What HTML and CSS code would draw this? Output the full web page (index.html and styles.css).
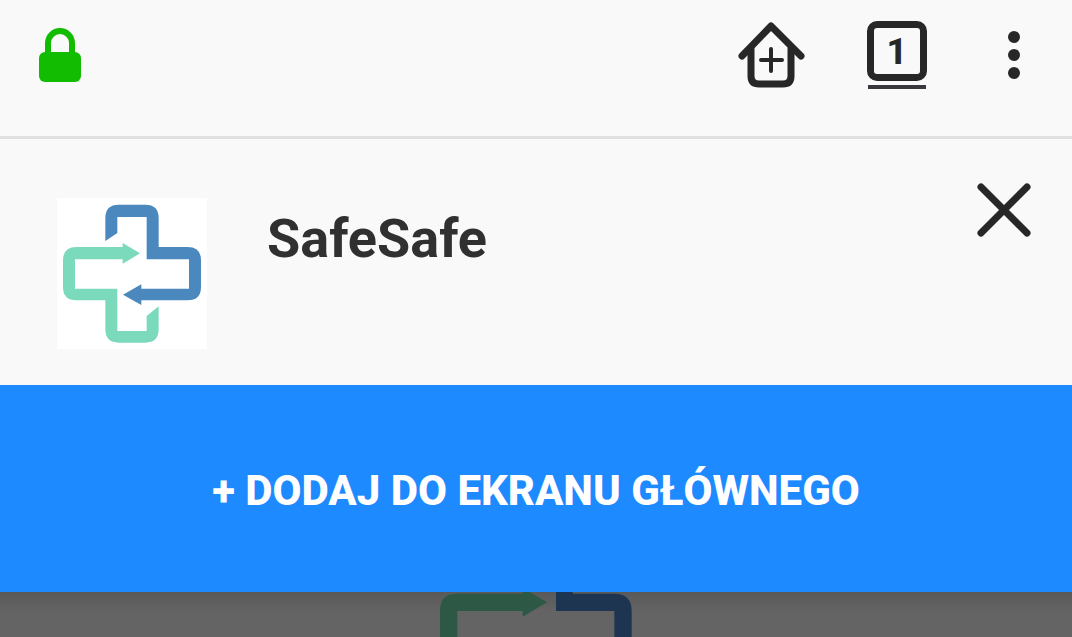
FILE: index.html
```html
<!DOCTYPE html>
<html lang="pl">
<head>
<meta charset="utf-8">
<meta name="viewport" content="width=device-width, initial-scale=1">
<title>SafeSafe</title>
<link rel="stylesheet" href="styles.css">
</head>
<body>
<header class="toolbar">
  <button class="icon-button lock" type="button" aria-label="Bezpieczne połączenie">
    <svg width="42" height="54" viewBox="0 0 42 54" aria-hidden="true">
      <path d="M9 27V15a12 12 0 0 1 24 0v12" fill="none" stroke="#12bc00" stroke-width="6"/>
      <rect y="24" width="42" height="30" rx="6" fill="#12bc00"/>
    </svg>
  </button>
  <div class="actions">
    <button class="icon-button" type="button" aria-label="Dodaj do ekranu głównego">
      <svg width="68" height="68" viewBox="0 0 68 68" fill="none" stroke="#272727" stroke-linecap="round" stroke-linejoin="round" aria-hidden="true">
        <path d="M4 35L33 5l30 30" stroke-width="7"/>
        <path d="M13 28v27q0 8 8 8h24q8 0 8-8V28" stroke-width="7"/>
        <path d="M23 39h21M33 28v22" stroke-width="4"/>
      </svg>
    </button>
    <button class="icon-button tabs" type="button" aria-label="Otwarte karty: 1"><span class="tab-count">1</span></button>
    <button class="icon-button menu" type="button" aria-label="Menu">
      <svg width="12" height="48" viewBox="0 0 12 48" fill="#272727" aria-hidden="true">
        <circle cx="6" cy="6" r="6"/><circle cx="6" cy="24" r="6"/><circle cx="6" cy="42" r="6"/>
      </svg>
    </button>
  </div>
</header>
<main>
  <section class="app">
    <svg class="app-logo" viewBox="36 24 450 453" role="img" aria-label="Logo SafeSafe">
      <path fill="#4b88bd" d="M181 153V84Q181 44 221 44H301Q341 44 341 84V171H428Q468 171 468 211V291Q468 331 428 331H289V345L234 314L289 283V296H432V208H305V81H217V129Z"/>
      <path fill="#7bdabc" d="M285 190L233 159V171H94Q54 171 54 211V291Q54 331 94 331H181V418Q181 458 221 458H301Q341 458 341 418V349L305 378V423H217V296H90V208H233V221Z"/>
    </svg>
    <h1 class="app-name">SafeSafe</h1>
    <button class="icon-button close" type="button" aria-label="Zamknij">
      <svg width="54" height="54" viewBox="0 0 54 54" fill="none" stroke="#272727" stroke-width="7" stroke-linecap="round" aria-hidden="true">
        <path d="M4 4l46 46M50 4L4 50"/>
      </svg>
    </button>
  </section>
  <button class="install" type="button">+ DODAJ DO EKRANU GŁÓWNEGO</button>
</main>
<div class="backdrop">
  <svg width="192" height="45" viewBox="63 66 576 135" aria-hidden="true">
    <path fill="#2e5846" d="M63 201V121Q63 71 113 71H311V66H332L384 97L311 140V123H115V201Z"/>
    <path fill="#1d3551" d="M411 66H461V71H586Q638 71 638 123V201H586V123H411Z"/>
  </svg>
</div>
</body>
</html>
```
FILE: styles.css
```css
* {
  box-sizing: border-box;
}

body {
  margin: 0;
  min-height: 100vh;
  display: flex;
  flex-direction: column;
  background: #f9f9f9;
  color: #303030;
  font-family: Roboto, "Liberation Sans", sans-serif;
}

button {
  border: 0;
  font-family: inherit;
  cursor: pointer;
}

.icon-button {
  display: flex;
  padding: 0;
  background: none;
  color: #272727;
}

.toolbar {
  display: flex;
  justify-content: space-between;
  align-items: center;
  padding: 21px 52px 47px 39px;
  border-bottom: 3px solid #e0e0e2;
}

.actions {
  display: flex;
  align-items: center;
  gap: 61px;
}

.tabs {
  flex-direction: column;
  align-items: center;
  gap: 4px;
}

.tabs::after {
  content: "";
  width: 58px;
  height: 4px;
  background: #38383d;
}

.tab-count {
  width: 60px;
  height: 60px;
  border: 7px solid #272727;
  border-radius: 10px;
  font-size: 36px;
  font-weight: 800;
  line-height: 48px;
  text-align: center;
}

.menu {
  padding: 0 0 0 20px;
}

.app {
  display: flex;
  align-items: flex-start;
  padding: 59px 41px 36px 57px;
}

.app-logo {
  width: 150px;
  height: 151px;
  background: #fff;
}

.app-name {
  flex: 1;
  margin: 9px 0 0 60px;
  font-size: 54px;
  font-weight: 700;
  line-height: 64px;
}

.close {
  margin-top: -15px;
}

.install {
  display: block;
  width: 100%;
  padding: 82px 20px 77px;
  background: #1e8aff;
  color: #fff;
  font-size: 42px;
  font-weight: 800;
  line-height: 48px;
}

.backdrop {
  flex: 1;
  display: flex;
  justify-content: center;
  background: linear-gradient(#595959, #646464 20px);
}
```
